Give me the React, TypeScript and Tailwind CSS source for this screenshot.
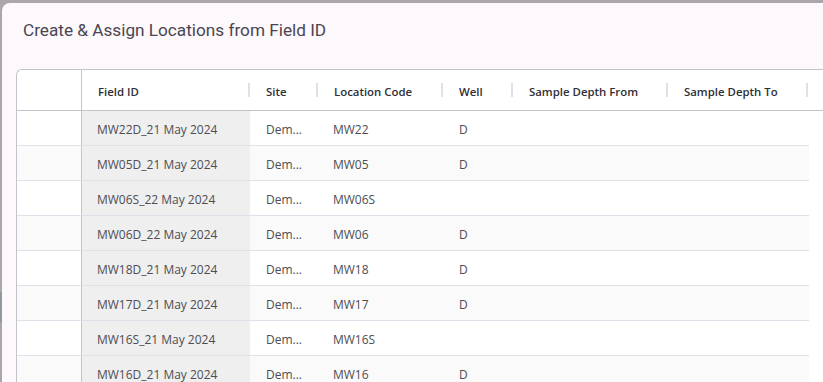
import React from 'react';

const rows = [
  { fieldId: 'MW22D_21 May 2024', site: 'Dem...', code: 'MW22', well: 'D' },
  { fieldId: 'MW05D_21 May 2024', site: 'Dem...', code: 'MW05', well: 'D' },
  { fieldId: 'MW06S_22 May 2024', site: 'Dem...', code: 'MW06S', well: '' },
  { fieldId: 'MW06D_22 May 2024', site: 'Dem...', code: 'MW06', well: 'D' },
  { fieldId: 'MW18D_21 May 2024', site: 'Dem...', code: 'MW18', well: 'D' },
  { fieldId: 'MW17D_21 May 2024', site: 'Dem...', code: 'MW17', well: 'D' },
  { fieldId: 'MW16S_21 May 2024', site: 'Dem...', code: 'MW16S', well: '' },
  { fieldId: 'MW16D_21 May 2024', site: 'Dem...', code: 'MW16', well: 'D' },
];

const HeaderCell = ({ label, className }: { label: string; className: string }) => (
  <div className={`relative flex items-center pl-[16px] pt-[3px] ${className}`}>
    <span className="truncate">{label}</span>
    <span className="absolute right-0 top-1/2 -translate-y-1/2 h-[14px] w-[2px] bg-[#dfe0e8]" />
  </div>
);

export default function App() {
  return (
    <div className="w-[823px] h-[382px] overflow-hidden bg-[#aaa6ab] relative">
      {/* backdrop hint lines */}
      <div className="absolute left-0 top-[292px] w-[2px] h-[30px] bg-[#8f9aa0]" />

      <div className="absolute left-[2px] top-[3px] right-0 bottom-0 bg-[#fdf8fc] rounded-tl-[8px] overflow-hidden">
        <h2 className="pl-[21px] pt-[16px] h-[66px] text-[17.2px] leading-[22px] text-[#4a4650] font-['Roboto',sans-serif]">
          Create &amp; Assign Locations from Field ID
        </h2>

        <div className="ml-[14px] border-l border-t border-[#c4c4cc] rounded-tl-[6px] bg-white font-['Open_Sans',sans-serif] text-[12px]">
          {/* header */}
          <div className="flex h-[41px] border-b border-[#c4c4cc] font-semibold text-[#2f2f35] text-[11.4px]">
            <div className="w-[65px] border-r border-[#c4c4cc]" />
            <HeaderCell label="Field ID" className="w-[168px]" />
            <HeaderCell label="Site" className="w-[68px]" />
            <HeaderCell label="Location Code" className="w-[125px]" />
            <HeaderCell label="Well" className="w-[70px]" />
            <HeaderCell label="Sample Depth From" className="w-[155px]" />
            <HeaderCell label="Sample Depth To" className="w-[140px]" />
          </div>

          {/* body */}
          <div className="w-[792px] text-[#4d4d52]">
            {rows.map((r, i) => (
              <div
                key={i}
                className={`flex h-[35px] border-b border-[#dfe1e8] ${i % 2 === 1 ? 'bg-[#fafafa]' : 'bg-white'}`}
              >
                <div className="w-[65px] border-r border-[#c4c4cc]" />
                <div className="w-[168px] bg-[#efefef] flex items-center pl-[15px] pt-[4px]">{r.fieldId}</div>
                <div className="w-[68px] flex items-center pl-[16px] pt-[4px]">{r.site}</div>
                <div className="w-[125px] flex items-center pl-[15px] pt-[4px]">{r.code}</div>
                <div className="w-[70px] flex items-center pl-[16px] pt-[4px]">{r.well}</div>
                <div className="w-[155px]" />
                <div className="flex-1" />
              </div>
            ))}
          </div>
        </div>
      </div>
    </div>
  );
}
